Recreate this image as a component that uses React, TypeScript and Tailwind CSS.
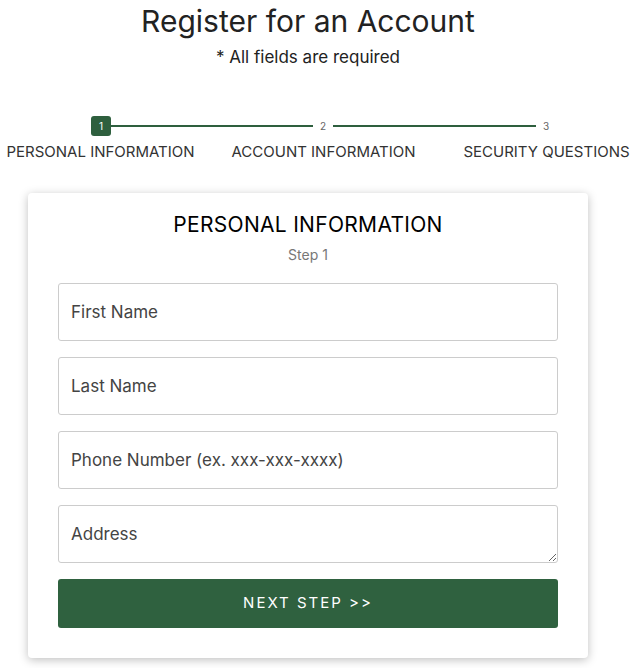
import React from 'react';

const font = { fontFamily: 'Inter, "Noto Sans", sans-serif' };

function Stepper() {
  return (
    <div className="mt-[49px] w-full overflow-hidden">
      <div className="flex items-center pl-[91px] h-5">
        <span className="w-5 h-5 rounded-[3px] bg-[#2e5f3e] text-white text-[10px] flex items-center justify-center">1</span>
        <span className="w-[202px] h-[2px] bg-[#2e5f3e]" />
        <span className="px-[7px] text-[10px] text-[#666]">2</span>
        <span className="w-[203px] h-[2px] bg-[#2e5f3e]" />
        <span className="px-[7px] text-[10px] text-[#666]">3</span>
      </div>
      <div className="grid grid-cols-[223px_223px_223px] ml-[-11px] mt-[6px] text-[15px] text-[#333] leading-5">
        <div className="text-center">PERSONAL INFORMATION</div>
        <div className="text-center">ACCOUNT INFORMATION</div>
        <div className="text-center">SECURITY QUESTIONS</div>
      </div>
    </div>
  );
}

function Field({ placeholder }: { placeholder: string }) {
  return (
    <input
      placeholder={placeholder}
      className="w-full h-[58px] border border-[#ccc] rounded-[3px] px-3 text-[17px] text-[#333] placeholder:text-[#444] outline-none"
    />
  );
}

export default function App() {
  return (
    <div className="min-h-[668px] bg-white text-[#222]" style={font}>
      <div className="w-[616px] flex flex-col items-center">
        <h1 className="mt-[1px] text-[30px] leading-10 text-[#222]">Register for an Account</h1>
        <p className="mt-[6px] text-[17px] leading-5 text-[#222]">* All fields are required</p>
      </div>
      <Stepper />
      <div className="mt-[31px] ml-[28px] w-[560px] bg-white rounded-[4px] shadow-[0_2px_10px_rgba(0,0,0,0.25)] px-[30px] pt-[20px] pb-[30px]">
        <h2 className="text-center text-[21px] tracking-[0.3px] leading-6 text-black">PERSONAL INFORMATION</h2>
        <p className="text-center text-[14px] text-[#777] mt-[10px] leading-4">Step 1</p>
        <div className="mt-[20px] flex flex-col gap-[16px]">
          <Field placeholder="First Name" />
          <Field placeholder="Last Name" />
          <Field placeholder="Phone Number (ex. xxx-xxx-xxxx)" />
          <textarea
            placeholder="Address"
            className="w-full h-[58px] border border-[#ccc] rounded-[3px] px-3 pt-[16px] text-[17px] text-[#333] placeholder:text-[#444] outline-none block"
          />
          <button className="w-full h-[49px] bg-[#2f613f] rounded-[3px] text-white text-[15px] tracking-[2px]">NEXT STEP &gt;&gt;</button>
        </div>
      </div>
    </div>
  );
}
